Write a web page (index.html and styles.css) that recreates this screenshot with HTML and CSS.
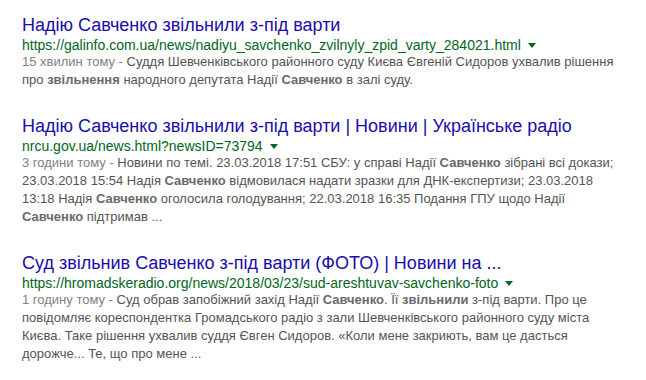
FILE: index.html
```html
<!DOCTYPE html>
<html lang="uk">
<head>
<meta charset="utf-8">
<title>Пошук</title>
<link rel="stylesheet" href="styles.css">
</head>
<body>
<div class="results">
  <div class="g">
    <h3 class="r"><a href="#">Надію Савченко звільнили з-під варти</a></h3>
    <div class="url"><cite>https://galinfo.com.ua/news/nadiyu_savchenko_zvilnyly_zpid_varty_284021.html</cite><span class="arrow"></span></div>
    <div class="s"><span class="date">15 хвилин тому - </span>Суддя Шевченківського районного суду Києва Євгеній Сидоров ухвалив рішення про <b>звільнення</b> народного депутата Надії <b>Савченко</b> в залі суду.</div>
  </div>
  <div class="g">
    <h3 class="r"><a href="#">Надію Савченко звільнили з-під варти | Новини | Українське радіо</a></h3>
    <div class="url"><cite>nrcu.gov.ua/news.html?newsID=73794</cite><span class="arrow"></span></div>
    <div class="s"><span class="date">3 години тому - </span>Новини по темі. 23.03.2018 17:51 СБУ: у справі Надії <b>Савченко</b> зібрані всі докази; 23.03.2018 15:54 Надія <b>Савченко</b> відмовилася надати зразки для ДНК-експертизи; 23.03.2018 13:18 Надія <b>Савченко</b> оголосила голодування; 22.03.2018 16:35 Подання ГПУ щодо Надії <b>Савченко</b> підтримав ...</div>
  </div>
  <div class="g">
    <h3 class="r"><a href="#">Суд звільнив Савченко з-під варти (ФОТО) | Новини на ...</a></h3>
    <div class="url"><cite>https://hromadskeradio.org/news/2018/03/23/sud-areshtuvav-savchenko-foto</cite><span class="arrow"></span></div>
    <div class="s"><span class="date">1 годину тому - </span>Суд обрав запобіжний захід Надії <b>Савченко</b>. Її <b>звільнили</b> з-під варти. Про це повідомляє кореспондентка Громадського радіо з зали Шевченківського районного суду міста Києва. Таке рішення ухвалив суддя Євген Сидоров. «Коли мене закриють, вам це дасться дорожче... Те, що про мене ...</div>
  </div>
</div>
</body>
</html>
```

FILE: styles.css
```css
html, body {
  margin: 0;
  padding: 0;
  background: #fff;
}
body {
  font-family: "Liberation Sans", Arial, sans-serif;
}
.results {
  padding: 13px 0 0 22px;
  width: 600px;
}
.g {
  margin-bottom: 25px;
}
.r {
  margin: 0;
  font-size: 18px;
  font-weight: normal;
  line-height: 24px;
  white-space: nowrap;
}
.r a {
  color: #1a0dab;
  text-decoration: none;
}
.url {
  height: 16px;
  line-height: 16px;
  font-size: 14px;
  white-space: nowrap;
}
.url cite {
  font-style: normal;
  color: #006621;
}
.arrow {
  display: inline-block;
  margin-left: 7px;
  vertical-align: middle;
  border-style: solid;
  border-width: 5px 4px 0 4px;
  border-color: #006621 transparent transparent transparent;
  position: relative;
  top: -1px;
}
.s {
  font-size: 13px;
  line-height: 18px;
  color: #545454;
}
.s .date {
  color: #808080;
}
.s b {
  color: #6a6a6a;
  font-weight: bold;
}
```
